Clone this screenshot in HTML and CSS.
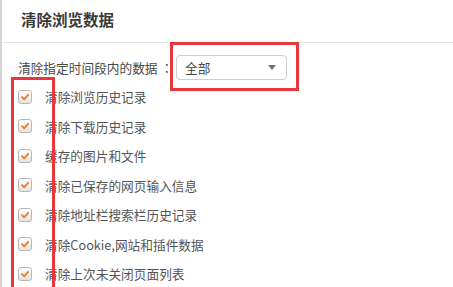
FILE: index.html
```html
<!DOCTYPE html>
<html>
<head>
<meta charset="utf-8">
<link rel="stylesheet" href="styles.css">
</head>
<body>
<div class="panel">
  <div class="header"><h1 class="title">清除浏览数据</h1></div>
  <div class="time-row">
    <span class="label">清除指定时间段内的数据 ：</span>
    <div class="select"><span class="select-text">全部</span><span class="arrow"></span></div>
  </div>
  <ul class="list">
    <li class="item"><span class="cb"><svg viewBox="0 0 10 10" class="check"><path d="M2 5.2 L4.2 7.3 L8.2 2.8" /></svg></span><span class="txt">清除浏览历史记录</span></li>
    <li class="item"><span class="cb"><svg viewBox="0 0 10 10" class="check"><path d="M2 5.2 L4.2 7.3 L8.2 2.8" /></svg></span><span class="txt">清除下载历史记录</span></li>
    <li class="item"><span class="cb"><svg viewBox="0 0 10 10" class="check"><path d="M2 5.2 L4.2 7.3 L8.2 2.8" /></svg></span><span class="txt">缓存的图片和文件</span></li>
    <li class="item"><span class="cb"><svg viewBox="0 0 10 10" class="check"><path d="M2 5.2 L4.2 7.3 L8.2 2.8" /></svg></span><span class="txt">清除已保存的网页输入信息</span></li>
    <li class="item"><span class="cb"><svg viewBox="0 0 10 10" class="check"><path d="M2 5.2 L4.2 7.3 L8.2 2.8" /></svg></span><span class="txt">清除地址栏搜索栏历史记录</span></li>
    <li class="item"><span class="cb"><svg viewBox="0 0 10 10" class="check"><path d="M2 5.2 L4.2 7.3 L8.2 2.8" /></svg></span><span class="txt">清除Cookie,网站和插件数据</span></li>
    <li class="item"><span class="cb"><svg viewBox="0 0 10 10" class="check"><path d="M2 5.2 L4.2 7.3 L8.2 2.8" /></svg></span><span class="txt">清除上次未关闭页面列表</span></li>
  </ul>
  <div class="mark mark-select"></div>
  <div class="mark mark-checks"></div>
</div>
</body>
</html>
```
FILE: styles.css
```css
html, body {
  margin: 0;
  padding: 0;
  background: #fff;
}
body {
  width: 453px;
  height: 287px;
  overflow: hidden;
  font-family: "Noto Sans CJK SC", "Noto Sans", sans-serif;
}
.panel {
  position: relative;
  height: 287px;
  overflow: hidden;
  border-left: 2px solid #d4d4d4;
  box-sizing: border-box;
}
.header {
  height: 42px;
  border-bottom: 1px solid #e6e6e6;
  display: flex;
  align-items: center;
  padding-left: 19px;
}
.title {
  margin: 0;
  font-size: 15.5px;
  font-weight: bold;
  color: #3a3a3a;
  line-height: 1;
  position: relative;
  top: -1px;
}
.time-row {
  display: flex;
  align-items: center;
  padding: 12px 0 0 16px;
}
.label {
  font-family: "Noto Sans CJK JP", "Noto Sans CJK SC", sans-serif;
  font-size: 12.7px;
  color: #4a4a4a;
  width: 158px;
  white-space: nowrap;
}
.select {
  width: 111px;
  height: 25px;
  box-sizing: border-box;
  border: 1px solid #cfcfcf;
  border-radius: 4px;
  display: flex;
  align-items: center;
  justify-content: space-between;
  padding: 0 10px 0 8px;
  background: #fff;
}
.select-text {
  font-size: 12.7px;
  color: #444;
}
.arrow {
  width: 0;
  height: 0;
  border-left: 4.5px solid transparent;
  border-right: 4.5px solid transparent;
  border-top: 5px solid #707070;
}
.list {
  list-style: none;
  margin: 2px 0 0 0;
  padding: 0 0 0 16px;
}
.item {
  height: 29.5px;
  display: flex;
  align-items: center;
}
.cb {
  width: 14px;
  height: 14px;
  box-sizing: border-box;
  border: 1px solid #b8b8b8;
  border-radius: 3px;
  background: linear-gradient(#ffffff, #e4e4e4);
  display: flex;
  align-items: center;
  justify-content: center;
  margin-right: 13px;
}
.check {
  width: 10px;
  height: 10px;
}
.check path {
  fill: none;
  stroke: #ee7a22;
  stroke-width: 1.8;
  stroke-linecap: round;
  stroke-linejoin: round;
}
.txt {
  font-size: 12.7px;
  color: #555;
  white-space: nowrap;
}
.mark {
  position: absolute;
  border: 3px solid #e8383b;
  box-sizing: border-box;
}
.mark-select {
  left: 168px;
  top: 42px;
  width: 129px;
  height: 49px;
}
.mark-checks {
  left: 9px;
  top: 77px;
  width: 44px;
  height: 230px;
}
```
